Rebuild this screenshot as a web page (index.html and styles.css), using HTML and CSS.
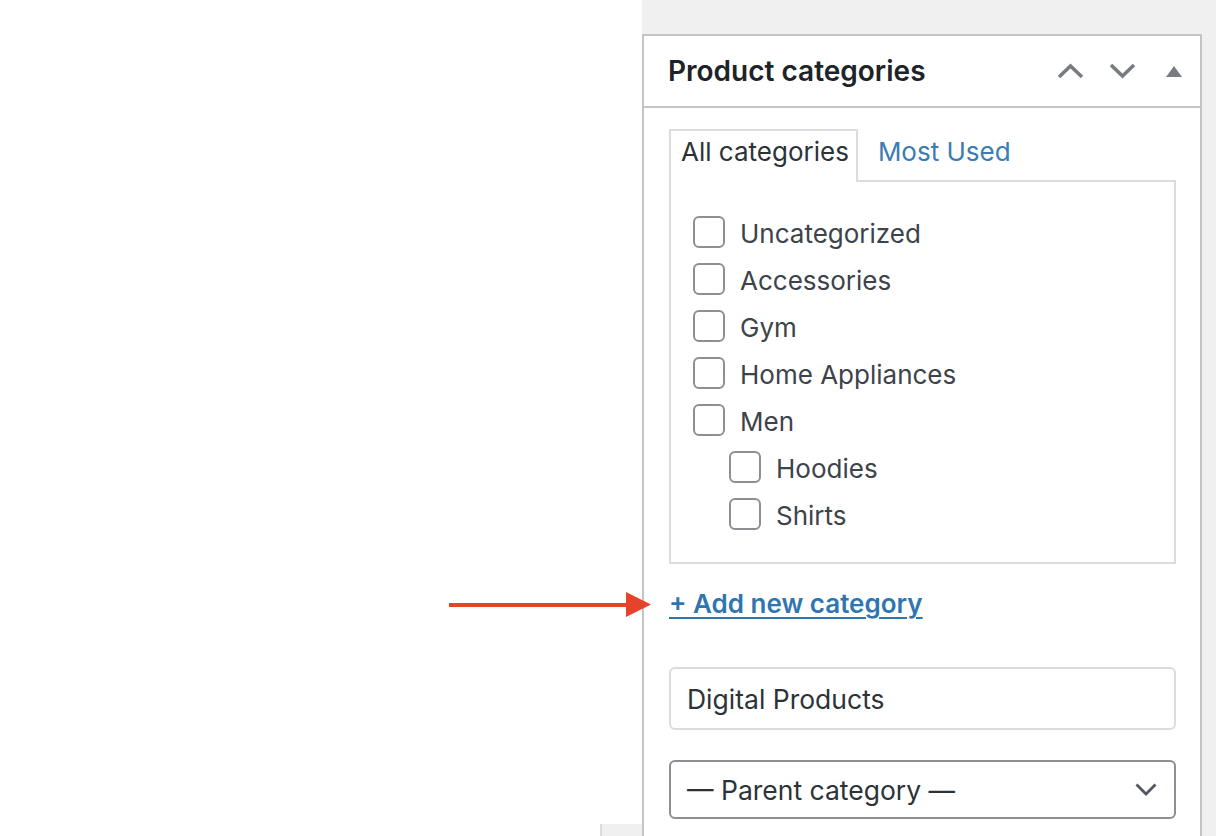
FILE: index.html
```html
<!DOCTYPE html>
<html lang="en">
<head>
    <meta charset="UTF-8">
    <meta name="viewport" content="width=device-width, initial-scale=1.0">
    <title>Product categories</title>
    <link rel="stylesheet" href="styles.css">
</head>
<body>
    <div class="screen">
        <div class="canvas"></div>
        <div class="sidebar">
            <div class="postbox">
                <div class="postbox-header">
                    <h2>Product categories</h2>
                    <div class="handle-actions">
                        <button class="handle" type="button">
                            <svg width="27" height="16" viewBox="0 0 27 16"><path d="M2 14 L13.5 3 L25 14" fill="none" stroke="#787c82" stroke-width="3.6"/></svg>
                        </button>
                        <button class="handle" type="button">
                            <svg width="27" height="16" viewBox="0 0 27 16"><path d="M2 2 L13.5 13 L25 2" fill="none" stroke="#787c82" stroke-width="3.6"/></svg>
                        </button>
                        <button class="handle" type="button">
                            <svg width="16" height="11" viewBox="0 0 16 11"><path d="M8 0 L16 11 L0 11 Z" fill="#787c82"/></svg>
                        </button>
                    </div>
                </div>
                <div class="inside">
                    <ul class="category-tabs">
                        <li class="tab active">All categories</li>
                        <li class="tab"><a href="#">Most Used</a></li>
                    </ul>
                    <div class="tabs-panel">
                        <ul class="checklist">
                            <li><label><input type="checkbox"><span>Uncategorized</span></label></li>
                            <li><label><input type="checkbox"><span>Accessories</span></label></li>
                            <li><label><input type="checkbox"><span>Gym</span></label></li>
                            <li><label><input type="checkbox"><span>Home Appliances</span></label></li>
                            <li><label><input type="checkbox"><span>Men</span></label></li>
                            <li class="child"><label><input type="checkbox"><span>Hoodies</span></label></li>
                            <li class="child"><label><input type="checkbox"><span>Shirts</span></label></li>
                        </ul>
                    </div>
                    <a href="#" class="add-toggle">+ Add new category</a>
                    <input class="new-cat" type="text" value="Digital Products">
                    <div class="parent-select">
                        <span>— Parent category —</span>
                        <svg width="22" height="13" viewBox="0 0 22 13"><path d="M1.5 1.5 L11 11 L20.5 1.5" fill="none" stroke="#50575e" stroke-width="2.8"/></svg>
                    </div>
                </div>
            </div>
        </div>
    </div>

    <svg class="pointer" width="210" height="26" viewBox="0 0 210 26">
        <rect x="0" y="11" width="180" height="4" fill="#e5432a"/>
        <path d="M177 0 L202 12.5 L177 25 Z" fill="#e5432a"/>
    </svg>
    <div class="scroll-stub"></div>
</body>
</html>
```

FILE: styles.css
```css
html, body {
    margin: 0;
    padding: 0;
    font-family: Inter, "Noto Sans", sans-serif;
    color: #3c434a;
    background: #fff;
}

.screen {
    display: flex;
    width: 1216px;
    height: 836px;
    overflow: hidden;
}

.canvas {
    width: 642px;
    flex: none;
    background: #fff;
}

.sidebar {
    flex: 1;
    background: #f0f0f1;
    padding: 34px 14px 0 0;
}

.postbox {
    background: #fff;
    border: 2px solid #c3c4c7;
    border-bottom: none;
    height: 100%;
}

.postbox-header {
    display: flex;
    align-items: center;
    justify-content: space-between;
    height: 70px;
    border-bottom: 2px solid #c3c4c7;
}

.postbox-header h2 {
    margin: 0;
    padding-left: 24px;
    font-size: 28px;
    font-weight: 600;
    color: #1d2327;
}

.handle-actions {
    display: flex;
}

.handle {
    width: 52px;
    height: 52px;
    padding: 0;
    border: none;
    background: none;
    display: flex;
    align-items: center;
    justify-content: center;
}

.inside {
    padding: 21px 24px 0 25px;
    display: flex;
    flex-direction: column;
}

.category-tabs {
    display: flex;
    margin: 0;
    padding: 0;
    list-style: none;
}

.tab {
    font-size: 26px;
    line-height: 40px;
    padding: 3px 20px 7px 20px;
}

.tab.active {
    position: relative;
    z-index: 1;
    background: #fff;
    border: 2px solid #dcdcde;
    border-bottom: none;
    margin-bottom: -2px;
    padding: 1px 7px 10px 10px;
    color: #2c3338;
}

.tab a {
    color: #3a7cb3;
    text-decoration: none;
}

.tabs-panel {
    border: 2px solid #dcdcde;
    padding: 26px 22px 25px;
}

.checklist {
    margin: 0;
    padding: 0;
    list-style: none;
}

.checklist li {
    height: 47px;
    display: flex;
    align-items: center;
}

.checklist li.child {
    padding-left: 36px;
}

.checklist label {
    display: flex;
    align-items: center;
    font-size: 26px;
}

.checklist label span {
    padding-top: 3px;
}

.checklist input {
    appearance: none;
    -webkit-appearance: none;
    width: 32px;
    height: 32px;
    margin: 0 15px 0 0;
    border: 2px solid #8c8f94;
    border-radius: 6px;
    background: #fff;
}

.add-toggle {
    margin-top: 20px;
    align-self: flex-start;
    font-size: 26px;
    line-height: 40px;
    font-weight: 600;
    color: #2f76b0;
    text-decoration: underline;
    text-underline-offset: 4px;
    text-decoration-thickness: 2px;
}

.new-cat {
    margin-top: 43px;
    height: 63px;
    box-sizing: border-box;
    border: 2px solid #dcdcde;
    border-radius: 6px;
    padding: 0 16px;
    font-family: Inter, "Noto Sans", sans-serif;
    font-size: 26.5px;
    color: #2c3338;
    outline: none;
}

.parent-select {
    margin-top: 30px;
    height: 59px;
    box-sizing: border-box;
    border: 2px solid #8c8f94;
    border-radius: 6px;
    padding: 0 17px 0 16px;
    display: flex;
    align-items: center;
    justify-content: space-between;
    font-size: 26.5px;
    color: #2c3338;
}

.pointer {
    position: absolute;
    left: 449px;
    top: 592px;
}

.scroll-stub {
    position: absolute;
    left: 600px;
    top: 824px;
    width: 40px;
    height: 12px;
    background: #f0f0f1;
    border-left: 2px solid #dcdcde;
}
```
